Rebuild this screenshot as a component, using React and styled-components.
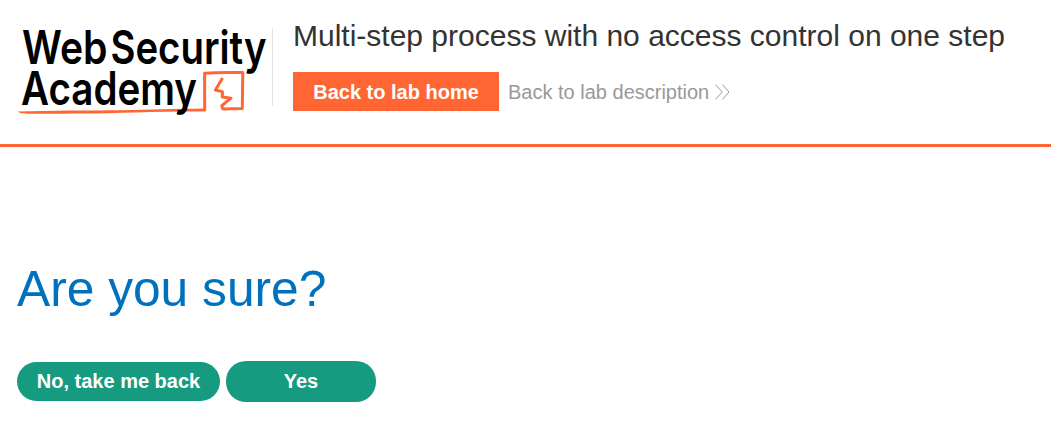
import React from "react";
import styled, { createGlobalStyle } from "styled-components";

const GlobalStyle = createGlobalStyle`
  *, *::before, *::after { box-sizing: border-box; }
  body {
    margin: 0;
    background: #fff;
    color: #333332;
    font-family: "Liberation Sans", Arial, sans-serif;
  }
`;

const Page = styled.div`
  min-height: 427px;
`;

const Header = styled.header`
  display: flex;
  align-items: flex-start;
  height: 147px;
  padding-left: 17px;
  border-bottom: 3px solid #ff6633;
`;

const LogoLink = styled.a`
  display: block;
  width: 256px;
  height: 78px;
  margin-top: 28px;
  border-right: 1px solid #e2e2e2;
`;

const LogoSvg = styled.svg`
  display: block;
  overflow: visible;
`;

const LogoText = styled.text`
  font-family: Inter, sans-serif;
  font-size: 46.5px;
  font-weight: 600;
  fill: #000;
`;

const TitleBlock = styled.div`
  display: flex;
  flex-direction: column;
  padding: 18px 0 0 20px;
`;

const Title = styled.h2`
  margin: 0 0 19px;
  font-size: 30px;
  font-weight: 400;
  line-height: 35px;
  white-space: nowrap;
`;

const Actions = styled.div`
  display: flex;
  align-items: flex-start;
  gap: 9px;
`;

const LabButton = styled.a`
  height: 39px;
  width: 206px;
  background: #ff6633;
  color: #fff;
  font-size: 20px;
  font-weight: 700;
  line-height: 41px;
  text-align: center;
  white-space: nowrap;
`;

const BackLink = styled.a`
  display: flex;
  align-items: center;
  gap: 6px;
  color: #999;
  font-size: 20px;
  line-height: 41px;
  white-space: nowrap;

  svg { margin-bottom: 2px; }
`;

const Content = styled.main`
  padding: 113px 17px 0;
`;

const Heading = styled.h1`
  margin: 0;
  color: #0071bd;
  font-size: 49.7px;
  font-weight: 400;
  line-height: 58px;
`;

const ButtonRow = styled.div`
  display: flex;
  align-items: center;
  gap: 6px;
  margin-top: 43px;
`;

const PillButton = styled.button`
  width: ${(p) => p.$width}px;
  height: ${(p) => p.$height}px;
  padding: 0;
  border: 0;
  border-radius: 20px;
  background: #179b80;
  color: #fff;
  font-family: inherit;
  font-size: 20px;
  font-weight: 700;
  white-space: nowrap;
`;

function Logo() {
  return (
    <LogoSvg width="250" height="92" viewBox="17 28 250 92" role="img" aria-label="Web Security Academy">
      <path d="M17.5 111.5 C50 110.5 90 110.6 120 110.3 C150 109.5 175 109 205 108.6 L205 111.6 C160 111.3 120 113.4 80 113.6 C55 114 30 114 21 113.2 Z" fill="#ff6633" />
      <path d="M204.7 111 L204.6 73.2 Q220 72 242.8 72.6 L242.3 108.5 L222.8 108.9 L221.8 105.7 L231 98.2 L222.3 97 L222.4 91.6 L215.4 90 L222.6 78" fill="none" stroke="#ff6633" strokeWidth="3" strokeLinejoin="round" />
      <LogoText x="22" y="64" textLength="85.5" lengthAdjust="spacingAndGlyphs">Web</LogoText>
      <LogoText x="110.5" y="64" textLength="156" lengthAdjust="spacingAndGlyphs">Security</LogoText>
      <LogoText x="21" y="105" textLength="176" lengthAdjust="spacingAndGlyphs">Academy</LogoText>
    </LogoSvg>
  );
}

function DoubleChevron() {
  return (
    <svg width="15" height="16" viewBox="0 0 15 16" fill="none" stroke="#999" strokeWidth="1">
      <path d="M0.5 0.5 L7.2 8 L0.5 15.5" />
      <path d="M7.3 0.5 L14 8 L7.3 15.5" />
    </svg>
  );
}

export default function App() {
  return (
    <Page>
      <GlobalStyle />
      <Header>
        <LogoLink><Logo /></LogoLink>
        <TitleBlock>
          <Title>Multi-step process with no access control on one step</Title>
          <Actions>
            <LabButton>Back to lab home</LabButton>
            <BackLink>Back to lab description<DoubleChevron /></BackLink>
          </Actions>
        </TitleBlock>
      </Header>
      <Content>
        <Heading>Are you sure?</Heading>
        <ButtonRow>
          <PillButton $width={203} $height={39}>No, take me back</PillButton>
          <PillButton $width={150} $height={41}>Yes</PillButton>
        </ButtonRow>
      </Content>
    </Page>
  );
}
